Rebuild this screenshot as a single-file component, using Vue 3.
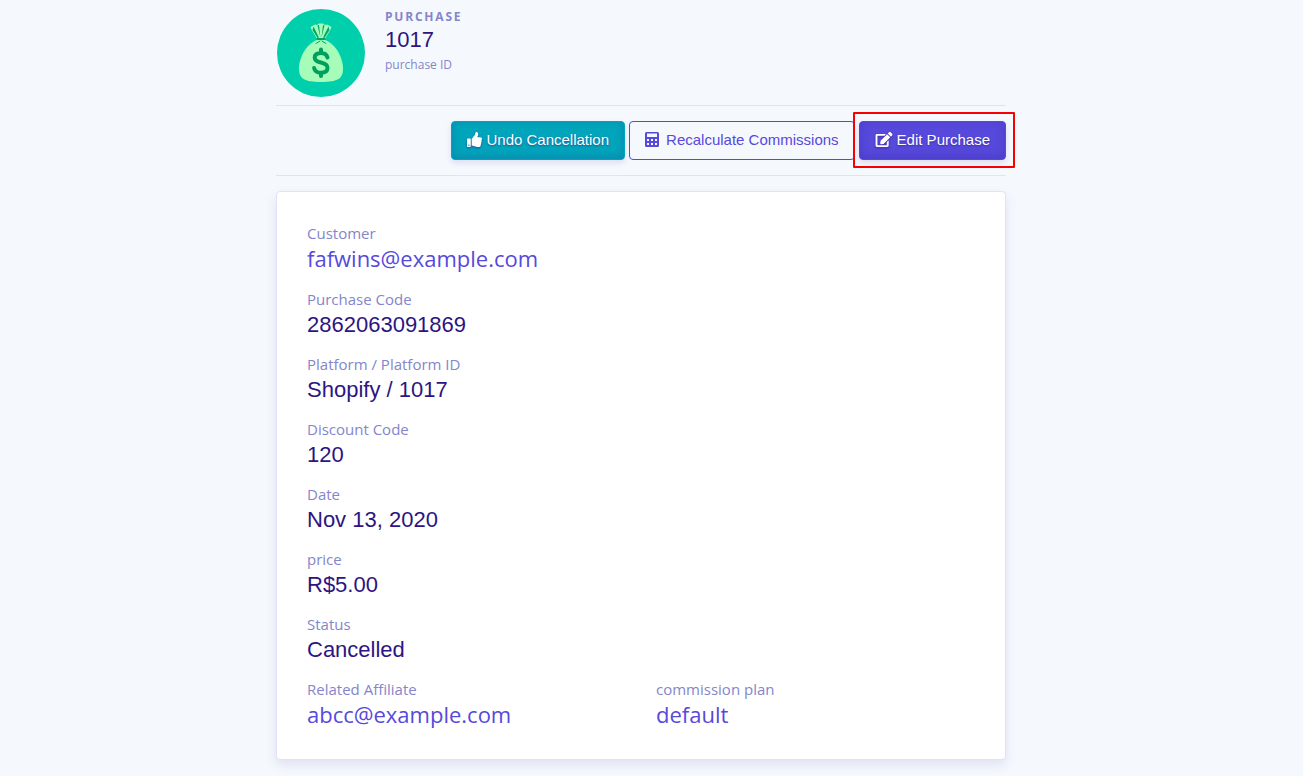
<template>
  <main class="page">
    <div class="container">
      <header class="purchase-header">
        <svg class="purchase-logo" viewBox="0 0 88 88" aria-hidden="true">
          <circle cx="44" cy="44" r="44" fill="#00cfab"/>
          <path fill="#a5fdb9" d="M40 31C29 35 22 49 22 59.500C22 69.500 27 73 44 73s22-3.500 22-13.500C66 49 59 35 48 31z"/>
          <path fill="#a5fdb9" d="M33.500 18l4.500-2.500 2 .5 2-1.500h4l2 1.500 2-.5 4.500 2.500-1 2.500L48.500 29h-9L34.500 20.500z"/>
          <path fill="#00a66a" d="M36.500 17.500L42 28.500 40.500 29l-5-8zM40.500 16.500l1.500-.5 1.500 13zM46 16l1.500.5L44.500 29zM51.500 17.500l1 3.500-5 8-1.500-.5z"/>
          <rect x="39.500" y="29" width="9" height="2" rx="1" fill="#00a66a"/>
          <path d="M43 32l-4 2.500M45 32l4 2.500" fill="none" stroke="#00a66a" stroke-width="1" stroke-linecap="round"/>
          <path d="M50.500 48.500c-.8-3.300-3.300-4.500-6.500-4.500-3.800 0-6.300 1.700-6.300 4.700 0 3.200 2.700 4 6.300 4.800 3.800.9 6.500 2 6.500 5.300 0 3.300-2.700 4.900-6.500 4.900-3.700 0-6.300-1.500-6.900-4.700M44 40.500v3M44 64v3" fill="none" stroke="#00a05c" stroke-width="4" stroke-linecap="round"/>
        </svg>
        <div class="purchase-title">
          <div class="eyebrow">Purchase</div>
          <h1 class="purchase-number">1017</h1>
          <div class="purchase-hint">purchase ID</div>
        </div>
      </header>

      <div class="actions">
        <button type="button" class="btn btn-info">
          <svg class="icon" viewBox="0 0 512 512" aria-hidden="true">
            <path fill="currentColor" d="M104 224H24c-13.255 0-24 10.745-24 24v240c0 13.255 10.745 24 24 24h80c13.255 0 24-10.745 24-24V248c0-13.255-10.745-24-24-24zM64 472c-13.255 0-24-10.745-24-24s10.745-24 24-24 24 10.745 24 24-10.745 24-24 24zM384 81.452c0 42.416-25.970 66.208-33.277 94.548h101.723c33.397 0 59.397 27.746 59.553 58.098.084 17.938-7.546 37.249-19.439 49.197l-.11.11c9.836 23.337 8.237 56.037-9.308 79.469 8.681 25.895-.069 57.704-16.382 74.757 4.298 17.598 2.244 32.575-6.148 44.632C440.202 511.587 389.616 512 346.839 512l-2.845-.001c-48.287-.017-87.806-17.598-119.560-31.725-15.957-7.099-36.821-15.887-52.651-16.178-6.540-.12-11.783-5.457-11.783-11.998v-213.770c0-3.200 1.282-6.271 3.558-8.521 39.614-39.144 56.648-80.587 89.117-113.111 14.804-14.832 20.188-37.236 25.393-58.902C282.515 39.293 291.817 0 312 0c24 0 72 8 72 81.452z"/>
          </svg>
          Undo Cancellation
        </button>
        <button type="button" class="btn btn-outline">
          <svg class="icon icon-calc" viewBox="0 0 14 15" aria-hidden="true">
            <path fill="currentColor" fill-rule="evenodd" d="M1.500 0h11Q14 0 14 1.500v12q0 1.500-1.500 1.500h-11Q0 15 0 13.500v-12Q0 0 1.500 0zM2 1.500v3.500h10v-3.500zM2 7v2h2V7zM6 7v2h2V7zM10 7v2h2V7zM2 11v2h2v-2zM6 11v2h2v-2zM10 11v2h2v-2z"/>
          </svg>
          Recalculate Commissions
        </button>
        <div class="highlight">
          <button type="button" class="btn btn-primary">
            <svg class="icon icon-edit" viewBox="0 0 576 512" aria-hidden="true">
              <path fill="currentColor" d="M402.600 83.200l90.200 90.200c3.800 3.800 3.800 10 0 13.800L274.400 405.600l-92.800 10.300c-12.400 1.400-22.900-9.100-21.500-21.500l10.300-92.800L388.800 83.200c3.800-3.800 10-3.800 13.800 0zm162-22.900l-48.800-48.800c-15.200-15.200-39.900-15.200-55.200 0l-35.400 35.400c-3.800 3.800-3.800 10 0 13.800l90.200 90.200c3.800 3.800 10 3.800 13.800 0l35.400-35.400c15.200-15.300 15.200-40 0-55.200zM384 346.200V448H64V128h229.800c3.200 0 6.200-1.300 8.500-3.500l40-40c7.600-7.600 2.200-20.500-8.500-20.500H48C21.500 64 0 85.500 0 112v352c0 26.500 21.500 48 48 48h352c26.500 0 48-21.500 48-48V306.200c0-10.700-12.900-16-20.500-8.500l-40 40c-2.200 2.300-3.500 5.300-3.500 8.500z"/>
            </svg>
            Edit Purchase
          </button>
        </div>
      </div>

      <section class="card">
        <dl v-for="(row, i) in rows" :key="i" class="row">
          <div v-for="field in row" :key="field.label" class="field">
            <dt>{{ field.label }}</dt>
            <dd>
              <a v-if="field.link" href="#">{{ field.value }}</a>
              <template v-else>{{ field.value }}</template>
            </dd>
          </div>
        </dl>
      </section>
    </div>
  </main>
</template>

<script setup>
const rows = [
  [{ label: 'Customer', value: 'fafwins@example.com', link: true }],
  [{ label: 'Purchase Code', value: '2862063091869' }],
  [{ label: 'Platform / Platform ID', value: 'Shopify / 1017' }],
  [{ label: 'Discount Code', value: '120' }],
  [{ label: 'Date', value: 'Nov 13, 2020' }],
  [{ label: 'price', value: 'R$5.00' }],
  [{ label: 'Status', value: 'Cancelled' }],
  [
    { label: 'Related Affiliate', value: 'abcc@example.com', link: true },
    { label: 'commission plan', value: 'default', link: true }
  ]
]
</script>

<style>
body {
  margin: 0;
  background: #f5f9fe;
}
</style>

<style scoped>
.page {
  padding: 9px 21px 16px 0;
  font-family: 'Open Sans', sans-serif;
  color: #8486c9;
}

.container {
  max-width: 730px;
  margin: 0 auto;
}

.purchase-header {
  display: flex;
  gap: 20px;
  padding: 0 0 8px 1px;
  border-bottom: 1px solid #dfe3f5;
}

.purchase-logo {
  width: 88px;
  height: 88px;
  flex-shrink: 0;
}

.eyebrow {
  font-size: 12px;
  line-height: 16px;
  font-weight: 700;
  letter-spacing: 0.15em;
  text-transform: uppercase;
}

.purchase-number {
  margin: 0;
  font-family: 'Liberation Sans', sans-serif;
  font-size: 22px;
  line-height: 30px;
  font-weight: 400;
  color: #2c1582;
}

.purchase-hint {
  font-size: 12px;
  line-height: 20px;
}

.actions {
  display: flex;
  flex-wrap: wrap;
  justify-content: flex-end;
  gap: 4px;
  padding: 15px 0;
  margin-bottom: 15px;
  border-bottom: 1px solid #dfe3f5;
}

.btn {
  display: flex;
  align-items: center;
  gap: 4px;
  padding: 7px 15px 9px;
  border: 1px solid transparent;
  border-radius: 4px;
  font-family: 'Liberation Sans', sans-serif;
  font-size: 15px;
  line-height: 21px;
  white-space: nowrap;
  cursor: pointer;
}

.btn-info,
.btn-primary {
  color: #fff;
  text-shadow: 0 1px 2px rgba(44, 21, 130, 0.6);
}

.btn-info {
  background: #00a5bb;
  border-color: #00a5bb;
  box-shadow: inset 0 -2px 10px rgba(44, 21, 130, 0.2), 0 3px 6px rgba(44, 21, 130, 0.12);
}

.btn-outline {
  gap: 7px;
  background: transparent;
  border-color: #5649dc;
  color: #5649dc;
}

.btn-primary {
  background: #5649dc;
  border-color: #5649dc;
  box-shadow: inset 0 -2px 10px rgba(44, 21, 130, 0.25), 0 3px 6px rgba(44, 21, 130, 0.12);
}

.icon {
  width: 15px;
  height: 15px;
  flex-shrink: 0;
}

.btn-info .icon,
.btn-primary .icon {
  filter: drop-shadow(0 1px 1px rgba(44, 21, 130, 0.6));
}

.icon-calc {
  width: 14px;
}

.icon-edit {
  width: 18px;
}

.highlight {
  position: relative;
}

.highlight::after {
  content: '';
  position: absolute;
  inset: -9px -9px -8px -6px;
  border: 2px solid #f70000;
  border-radius: 1px;
  pointer-events: none;
}

.card {
  padding: 30px;
  border: 1px solid #dfe3f5;
  border-radius: 4px;
  background: #fff;
  box-shadow: 0 5px 12px rgba(44, 21, 130, 0.1);
}

.row {
  display: grid;
  grid-auto-flow: column;
  grid-auto-columns: 1fr;
  gap: 30px;
  margin: 0 0 15px;
}

.row:last-child {
  margin-bottom: 0;
}

dt {
  font-size: 15px;
  line-height: 23px;
}

dd {
  margin: 0;
  font-family: 'Liberation Sans', sans-serif;
  font-size: 22px;
  line-height: 27px;
  color: #2c1582;
}

dd a {
  display: block;
  padding-bottom: 2px;
  font-family: 'Open Sans', sans-serif;
  line-height: 26px;
  color: #5649dc;
  text-decoration: none;
}
</style>
